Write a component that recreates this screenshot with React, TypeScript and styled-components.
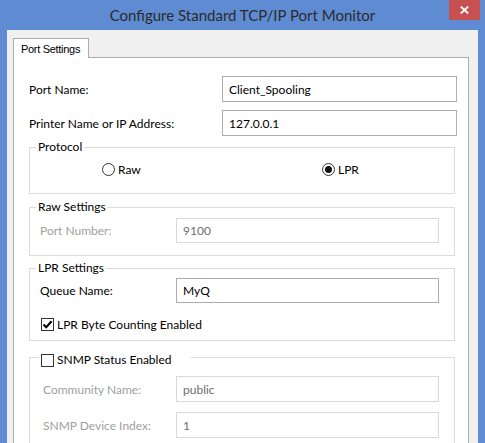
import React from "react";
import styled, { createGlobalStyle } from "styled-components";

const GlobalStyle = createGlobalStyle`
  html, body {
    margin: 0;
    padding: 0;
    background: #5f8bd3;
    overflow: hidden;
  }
  body {
    font-family: Lato, "Noto Sans", sans-serif;
    font-size: 12px;
    color: #000;
  }
`;

const Window = styled.div`
  width: 485px;
  height: 443px;
  display: flex;
  flex-direction: column;
  background: #5f8bd3;
  overflow: hidden;
`;

const TitleBar = styled.header`
  flex: none;
  height: 30px;
  display: grid;
  grid-template-columns: 1fr auto 1fr;
`;

const Title = styled.h1`
  grid-column: 2;
  margin: 0;
  align-self: center;
  padding-bottom: 1px;
  font-family: Lato, "Noto Sans", sans-serif;
  font-weight: 400;
  font-size: 15px;
  color: #2b2b2b;
  white-space: nowrap;
`;

const CloseButton = styled.button`
  grid-column: 3;
  justify-self: end;
  align-self: start;
  width: 31px;
  height: 20px;
  margin-right: 5px;
  padding: 0;
  border: none;
  background: #c75050;
  display: flex;
  align-items: center;
  justify-content: center;
`;

const Client = styled.div`
  flex: 1;
  min-height: 0;
  margin: 0 7px;
  padding: 8px 9px 0 6px;
  background: #f0f0f0;
  display: flex;
  flex-direction: column;
`;

const TabStrip = styled.div`
  display: flex;
`;

/* tab captions use the older dialog shell font */
const Tab = styled.div`
  position: relative;
  z-index: 1;
  box-sizing: border-box;
  width: 76px;
  height: 20px;
  margin-bottom: -1px;
  padding-left: 7px;
  border: 1px solid #adadad;
  border-bottom: none;
  background: #fff;
  display: flex;
  align-items: center;
  white-space: nowrap;
  font-family: "Liberation Sans", Arial, sans-serif;
  font-size: 11px;
  letter-spacing: -0.3px;
`;

const Panel = styled.div`
  flex: 1;
  border: 1px solid #adadad;
  background: #fff;
  padding: 18px 13px 0 15px;
  display: flex;
  flex-direction: column;
`;

const FieldRow = styled.div<{ $label: number; $field: number; $top?: number }>`
  display: grid;
  grid-template-columns: ${(p) => p.$label}px ${(p) => p.$field}px;
  align-items: center;
  margin-top: ${(p) => p.$top ?? 0}px;
`;

const Label = styled.label<{ $disabled?: boolean }>`
  color: ${(p) => (p.$disabled ? "#a0a0a0" : "#000")};
  white-space: nowrap;
`;

const TextBox = styled.input<{ $h?: number }>`
  box-sizing: border-box;
  width: 100%;
  height: ${(p) => p.$h ?? 26}px;
  margin: 0;
  padding: 0 6px;
  border: 1px solid #adadad;
  border-radius: 0;
  background: #fff;
  font-family: Lato, "Noto Sans", sans-serif;
  font-size: 12px;
  color: #000;
  outline: none;

  &:disabled {
    border-color: #d9d9d9;
    color: #6d6d6d;
    background: #fff;
  }
`;

const GroupBox = styled.fieldset<{ $top: number; $pt: number; $pb: number; $pl?: number }>`
  margin: ${(p) => p.$top}px 0 0 0;
  min-width: 0;
  border: 1px solid #dcdcdc;
  padding: ${(p) => p.$pt}px 16px ${(p) => p.$pb}px ${(p) => p.$pl ?? 10}px;
`;

/* legends sit a few pixels left of the group's content column */
const Legend = styled.legend`
  margin-left: -4px;
  padding: 0 2px;
  line-height: 16px;
  height: 16px;
`;

const CheckLegend = styled.legend`
  margin-left: -4px;
  padding: 6px 20px 0 2px;
  line-height: 16px;
  display: flex;
  align-items: center;
  gap: 3px;
`;

const RadioRow = styled.div`
  display: grid;
  grid-template-columns: 220px auto;
  margin-left: 62px;
  height: 16px;
  align-items: center;
`;

const Choice = styled.label`
  display: flex;
  align-items: center;
  gap: 3px;
  white-space: nowrap;
`;

const RadioCircle = styled.span<{ $on?: boolean }>`
  box-sizing: border-box;
  width: 13px;
  height: 13px;
  border: 1px solid #333;
  border-radius: 50%;
  background: #fff;
  display: flex;
  align-items: center;
  justify-content: center;

  &::after {
    content: "";
    display: ${(p) => (p.$on ? "block" : "none")};
    width: 7px;
    height: 7px;
    border-radius: 50%;
    background: #111;
  }
`;

const CheckBoxBox = styled.span`
  box-sizing: border-box;
  width: 13px;
  height: 13px;
  border: 1px solid #333;
  background: #fff;
  display: flex;
  align-items: center;
  justify-content: center;
`;

const CheckRow = styled.div`
  display: flex;
  align-items: center;
  height: 16px;
  margin-top: 13px;
  margin-left: 1px;
  gap: 3px;
`;

const CheckBox = ({ checked }: { checked?: boolean }) => (
  <CheckBoxBox>
    {checked && (
      <svg width="11" height="11" viewBox="0 0 11 11">
        <path d="M1.5 5.5 L4.2 8.3 L9.6 2.2" fill="none" stroke="#000" strokeWidth="2.1" />
      </svg>
    )}
  </CheckBoxBox>
);

export default function App() {
  return (
    <>
      <GlobalStyle />
      <Window>
        <TitleBar>
          <Title>Configure Standard TCP/IP Port Monitor</Title>
          <CloseButton aria-label="Close">
            <svg width="9" height="8" viewBox="0 0 9 8">
              <path d="M0.8 0.5 L8.2 7.5 M8.2 0.5 L0.8 7.5" stroke="#fff" strokeWidth="1.8" />
            </svg>
          </CloseButton>
        </TitleBar>
        <Client>
          <TabStrip>
            <Tab>Port Settings</Tab>
          </TabStrip>
          <Panel>
            <FieldRow $label={193} $field={235}>
              <Label>Port Name:</Label>
              <TextBox readOnly value="Client_Spooling" />
            </FieldRow>
            <FieldRow $label={193} $field={235} $top={8}>
              <Label>Printer Name or IP Address:</Label>
              <TextBox readOnly value="127.0.0.1" />
            </FieldRow>

            <GroupBox $top={3} $pt={6} $pb={16}>
              <Legend>Protocol</Legend>
              <RadioRow>
                <Choice>
                  <RadioCircle />
                  Raw
                </Choice>
                <Choice>
                  <RadioCircle $on />
                  LPR
                </Choice>
              </RadioRow>
            </GroupBox>

            <GroupBox $top={5} $pt={3} $pb={12}>
              <Legend>Raw Settings</Legend>
              <FieldRow $label={136} $field={263}>
                <Label $disabled>Port Number:</Label>
                <TextBox $h={25} disabled value="9100" readOnly />
              </FieldRow>
            </GroupBox>

            <GroupBox $top={4} $pt={2} $pb={8}>
              <Legend>LPR Settings</Legend>
              <FieldRow $label={136} $field={263}>
                <Label>Queue Name:</Label>
                <TextBox $h={25} readOnly value="MyQ" />
              </FieldRow>
              <CheckRow>
                <CheckBox checked />
                LPR Byte Counting Enabled
              </CheckRow>
            </GroupBox>

            <GroupBox $top={5} $pt={8} $pb={12} $pl={13}>
              <CheckLegend>
                <CheckBox />
                SNMP Status Enabled
              </CheckLegend>
              <FieldRow $label={133} $field={263}>
                <Label $disabled>Community Name:</Label>
                <TextBox disabled readOnly value="public" />
              </FieldRow>
              <FieldRow $label={133} $field={263} $top={10}>
                <Label $disabled>SNMP Device Index:</Label>
                <TextBox disabled readOnly value="1" />
              </FieldRow>
            </GroupBox>
          </Panel>
        </Client>
      </Window>
    </>
  );
}
